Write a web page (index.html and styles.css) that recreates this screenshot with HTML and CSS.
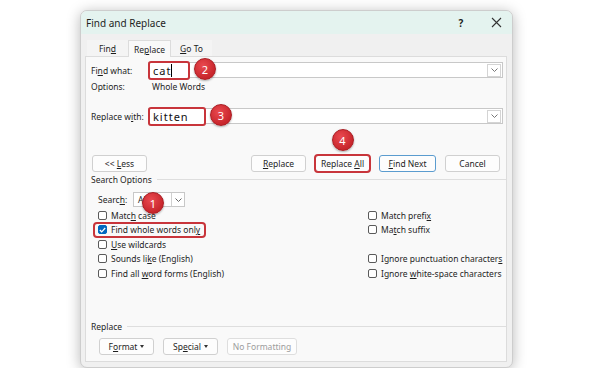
FILE: index.html
```html
<!DOCTYPE html>
<html lang="en">
	<head>
		<meta charset="UTF-8" />
		<meta name="viewport" content="width=device-width, initial-scale=1.0" />
		<title>Find and Replace</title>
		<link rel="stylesheet" href="styles.css">
	</head>
	<body>
		<div class="dialog">
			<div class="titlebar">
				<span class="title">Find and Replace</span>
				<span class="help">?</span>
				<span class="close">
					<svg width="11" height="11" viewBox="0 0 11 11"><path d="M1 1L10 10M10 1L1 10" stroke="#333" stroke-width="1.1" fill="none" /></svg>
				</span>
			</div>

			<div class="tabs">
				<span class="tab"><span>Fin<u>d</u></span></span>
				<span class="tab active"><span>Re<u>p</u>lace</span></span>
				<span class="tab"><span><u>G</u>o To</span></span>
			</div>

			<div class="panel">
				<div class="field-row">
					<span class="field-label">Fi<u>n</u>d what:</span>
					<div class="combo">
						<span class="mark mark-cat"><span>cat</span><span class="caret"></span></span>
						<span class="badge">2</span>
						<span class="combo-arrow"><svg width="7" height="4" viewBox="0 0 7 4"><path d="M0.5 0.5L3.5 3.5L6.5 0.5" stroke="#777" fill="none" /></svg></span>
					</div>
				</div>
				<div class="options-row">
					<span class="field-label">Options:</span>
					<span class="options-value">Whole Words</span>
				</div>

				<div class="field-row replace-row">
					<span class="field-label">Replace w<u>i</u>th:</span>
					<div class="combo">
						<span class="mark mark-kitten"><span>kitten</span></span>
						<span class="badge">3</span>
						<span class="combo-arrow"><svg width="7" height="4" viewBox="0 0 7 4"><path d="M0.5 0.5L3.5 3.5L6.5 0.5" stroke="#777" fill="none" /></svg></span>
					</div>
				</div>

				<div class="button-row">
					<span class="btn btn-less"><span>&lt;&lt; <u>L</u>ess</span></span>
					<div class="button-group">
						<span class="btn"><span><u>R</u>eplace</span></span>
						<span class="btn marked"><span>Replace <u>A</u>ll</span><span class="badge badge-above">4</span></span>
						<span class="btn default"><span><u>F</u>ind Next</span></span>
						<span class="btn"><span>Cancel</span></span>
					</div>
				</div>

				<div class="legend"><span>Search Options</span></div>

				<div class="search-row">
					<span class="search-label">Searc<u>h</u>:</span>
					<div class="select">
						<span class="select-value">All</span>
						<span class="select-arrow"><svg width="7" height="4" viewBox="0 0 7 4"><path d="M0.5 0.5L3.5 3.5L6.5 0.5" stroke="#666" fill="none" /></svg></span>
						<span class="badge badge-over">1</span>
					</div>
				</div>

				<div class="checks">
					<div class="check"><span class="box"></span><span>Matc<u>h</u> case</span></div>
					<div class="check"><span class="box"></span><span>Match prefi<u>x</u></span></div>
					<div class="check marked">
						<span class="box checked"><svg width="7" height="6" viewBox="0 0 7 6"><path d="M0.8 3L2.7 4.8L6.2 1" stroke="#fff" stroke-width="1.2" fill="none" /></svg></span>
						<span>Find whole words onl<u>y</u></span>
					</div>
					<div class="check"><span class="box"></span><span>Ma<u>t</u>ch suffix</span></div>
					<div class="check"><span class="box"></span><span><u>U</u>se wildcards</span></div>
					<div></div>
					<div class="check"><span class="box"></span><span>Sounds li<u>k</u>e (English)</span></div>
					<div class="check"><span class="box"></span><span>Ignore punctuation character<u>s</u></span></div>
					<div class="check"><span class="box"></span><span>Find all <u>w</u>ord forms (English)</span></div>
					<div class="check"><span class="box"></span><span>Ignore <u>w</u>hite-space characters</span></div>
				</div>

				<div class="legend legend-replace"><span>Replace</span></div>

				<div class="bottom-row">
					<span class="btn"><span>F<u>o</u>rmat</span><i class="tri"></i></span>
					<span class="btn"><span>Sp<u>e</u>cial</span><i class="tri"></i></span>
					<span class="btn disabled"><span>No Formatting</span></span>
				</div>
			</div>
		</div>
	</body>
</html>
```

FILE: styles.css
```css
/* base */
* {
	box-sizing: border-box;
}

body {
	margin: 0;
	padding: 10px 0 0 80px;
	background: #ffffff;
	font-family: 'Noto Sans', 'Segoe UI', sans-serif;
	font-size: 8.5px;
	color: #1e1e1e;
}

u {
	text-underline-offset: 1px;
}

/* dialog frame */
.dialog {
	width: 433px;
	height: 358px;
	background: #f0f0f0;
	border: 1px solid #cdcdcd;
	border-radius: 7px;
	box-shadow: 0 2px 14px rgba(0, 0, 0, 0.28);
	display: flex;
	flex-direction: column;
	overflow: hidden;
}

.titlebar {
	height: 23px;
	background: #e4f3ef;
	display: flex;
	align-items: center;
	padding-left: 5px;
}

.title {
	flex: 1;
	font-size: 10px;
}

.help {
	width: 14px;
	text-align: center;
	font-size: 10px;
	font-weight: bold;
	margin-right: 21px;
}

.close {
	width: 14px;
	height: 14px;
	display: flex;
	align-items: center;
	justify-content: center;
	margin-right: 9px;
}

/* tabs */
.tabs {
	margin-top: 6px;
	height: 16px;
	padding-left: 6px;
	display: flex;
	position: relative;
	z-index: 1;
}

.tab {
	width: 41px;
	height: 16px;
	display: flex;
	align-items: center;
	justify-content: center;
	background: #f4f4f4;
}

.tab.active {
	width: 43px;
	height: 17px;
	background: #f9f9f9;
	border: 1px solid #dcdcdc;
	border-bottom: none;
}

.panel {
	flex: 1;
	margin: 0 5px 5px 4px;
	background: #f9f9f9;
	border: 1px solid #dcdcdc;
	padding: 0 3px 0 5px;
	display: flex;
	flex-direction: column;
}

/* find / replace fields */
.field-row {
	margin-top: 5px;
	height: 16px;
	display: flex;
	align-items: center;
}

.replace-row {
	margin-top: 16px;
}

.field-label {
	width: 57px;
	flex-shrink: 0;
}

.combo {
	flex: 1;
	height: 16px;
	background: #ffffff;
	border: 1px solid #c8c8c8;
	display: flex;
	align-items: center;
}

.mark {
	height: 19px;
	margin-left: -1px;
	padding: 0 3px;
	border: 2px solid #c8353b;
	border-radius: 3px;
	display: flex;
	align-items: center;
	font-size: 11px;
	color: #111;
	background: #ffffff;
}

.mark span {
	letter-spacing: 1px;
}

.mark-cat {
	width: 42px;
}

.mark-kitten {
	width: 58px;
}

.mark .caret {
	display: block;
	width: 1px;
	min-width: 1px;
	height: 13px;
	background: #000000;
	flex-shrink: 0;
}

.combo-arrow {
	margin-left: auto;
	margin-right: 1px;
	width: 14px;
	height: 13px;
	border: 1px solid #d4d4d4;
	display: flex;
	align-items: center;
	justify-content: center;
}

.options-row {
	margin-top: 2px;
	height: 12px;
	display: flex;
	align-items: center;
}

.options-value {
	padding-left: 4px;
}

/* annotation badges */
.badge {
	width: 22px;
	height: 22px;
	margin: -4px 0 -2px 4px;
	flex-shrink: 0;
	border-radius: 50%;
	background: radial-gradient(circle at 40% 35%, #ea4a50, #c8262c 70%);
	border: 1px solid #a91d23;
	box-shadow: 0 1px 2px rgba(0, 0, 0, 0.3);
	color: #ffffff;
	font-size: 11px;
	display: flex;
	align-items: center;
	justify-content: center;
	position: relative;
	z-index: 2;
}

.badge-above {
	position: absolute;
	left: 50%;
	bottom: calc(100% + 5px);
	margin: 0 0 0 -11px;
}

.badge-over {
	position: absolute;
	left: 8px;
	top: -1px;
	margin: 0;
}

/* buttons */
.button-row {
	margin-top: 31px;
	height: 17px;
	display: flex;
}

.btn-less {
	margin-left: 1px;
}

.button-group {
	margin-left: auto;
	margin-right: 3px;
	display: flex;
	gap: 9px;
}

.btn {
	width: 55px;
	height: 17px;
	background: #fdfdfd;
	border: 1px solid #d0d0d0;
	border-radius: 3px;
	display: flex;
	align-items: center;
	justify-content: center;
	position: relative;
	color: #1e1e1e;
}

.btn.default {
	width: 57px;
	border-color: #5b9ccf;
}

.btn.marked {
	outline: 2px solid #c8353b;
	outline-offset: -1px;
}

.btn.disabled {
	width: 70px;
	color: #9c9c9c;
	border-color: #dedede;
}

.tri {
	width: 0;
	height: 0;
	margin-left: 3px;
	border-left: 2.5px solid transparent;
	border-right: 2.5px solid transparent;
	border-top: 3px solid #333;
}

/* group legends */
.legend {
	margin-top: 2px;
	height: 11px;
	display: flex;
	align-items: center;
	margin-right: -3px;
}

.legend::after {
	content: '';
	flex: 1;
	margin-left: 5px;
	border-top: 1px solid #dedede;
}

.legend-replace {
	margin-top: 40px;
}

/* search options */
.search-row {
	margin-top: 7px;
	height: 15px;
	padding-left: 7px;
	display: flex;
	align-items: center;
}

.search-label {
	width: 35px;
}

.select {
	width: 52px;
	height: 15px;
	background: #ffffff;
	border: 1px solid #c8c8c8;
	display: flex;
	align-items: center;
	position: relative;
}

.select-value {
	flex: 1;
	padding-left: 4px;
}

.select-arrow {
	width: 13px;
	height: 13px;
	border-left: 1px solid #d0d0d0;
	display: flex;
	align-items: center;
	justify-content: center;
}

.checks {
	margin-top: 1px;
	padding-left: 7px;
	display: grid;
	grid-template-columns: 270px 1fr;
	grid-auto-rows: 14.5px;
}

.check {
	display: flex;
	align-items: center;
	position: relative;
	width: max-content;
}

.check.marked::before {
	content: '';
	position: absolute;
	top: -1px;
	bottom: -1px;
	left: -5px;
	right: -6px;
	border: 2px solid #c8353b;
	border-radius: 4px;
}

.box {
	width: 9px;
	height: 9px;
	margin-right: 4px;
	border: 1px solid #5a5a5a;
	border-radius: 2px;
	background: #ffffff;
	display: flex;
	align-items: center;
	justify-content: center;
}

.box.checked {
	background: #0067c0;
	border-color: #0067c0;
}

.bottom-row {
	margin-top: 6px;
	padding-left: 8px;
	display: flex;
	gap: 9px;
}
```
